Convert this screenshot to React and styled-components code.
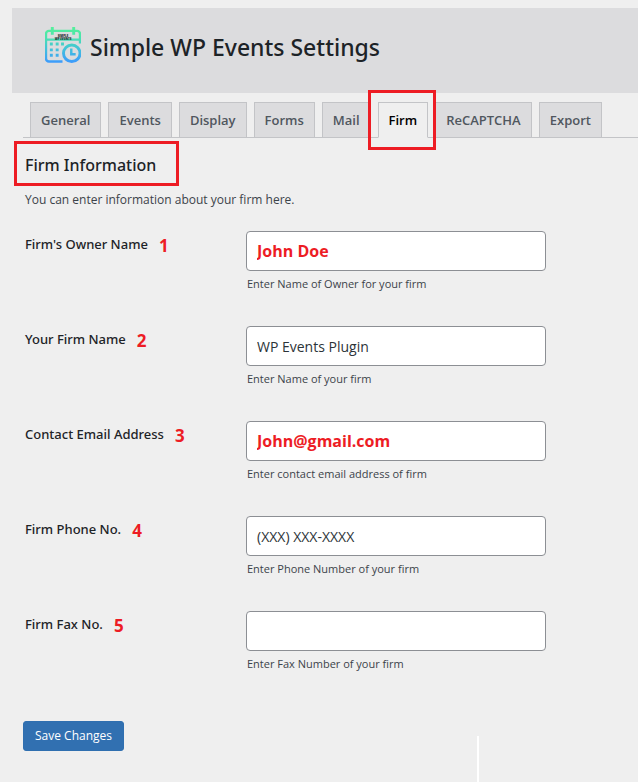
import React from "react";
import styled, { createGlobalStyle } from "styled-components";

const GlobalStyle = createGlobalStyle`
  *, *::before, *::after { box-sizing: border-box; }
  body {
    margin: 0;
    background: #efefef;
    color: #3c434a;
    font-family: "Open Sans", "Noto Sans", sans-serif;
    font-size: 13px;
    line-height: 20px;
  }
`;

const RED = "#ed1c24";

const Page = styled.div`
  display: flex;
  flex-direction: column;
  min-height: 100vh;
  padding: 8px 0 0 12px;
`;

const Header = styled.header`
  display: flex;
  align-items: center;
  gap: 9px;
  height: 85px;
  padding: 0 33px 11px;
  background: #dcdcde;
`;

const Title = styled.h1`
  margin: 0;
  padding-top: 3px;
  color: #1d2327;
  font-family: "Noto Sans", "Open Sans", sans-serif;
  font-size: 23px;
  font-weight: 500;
  line-height: 32px;
  white-space: nowrap;
`;

const Tabs = styled.nav`
  display: flex;
  gap: 7px;
  margin: 9px 0 0 11px;
  padding: 0 7px;
  border-bottom: 1px solid #c3c4c7;
`;

const Tab = styled.a`
  position: relative;
  height: 36px;
  margin-bottom: -1px;
  padding: 7px 10px;
  border: 1px solid #c3c4c7;
  border-bottom-color: ${(p) => (p.$active ? "#efefef" : "#c3c4c7")};
  background: ${(p) => (p.$active ? "#efefef" : "#dcdcde")};
  color: ${(p) => (p.$active ? "#000" : "#50575e")};
  font-weight: 600;
  line-height: 20px;
  text-decoration: none;
  white-space: nowrap;
  z-index: ${(p) => (p.$active ? 1 : 0)};
`;

const TabHighlight = styled.span`
  position: absolute;
  inset: -13px -9px -13px -11px;
  border: 3px solid ${RED};
  pointer-events: none;
`;

const Form = styled.form`
  display: flex;
  flex: 1;
  flex-direction: column;
  padding-left: 11px;
`;

const Heading = styled.h2`
  align-self: flex-start;
  width: 165px;
  margin: 3px 0 0 -9px;
  padding: 10px 8px 6px;
  border: 3px solid ${RED};
  color: #1d2327;
  font-family: "Noto Sans", "Open Sans", sans-serif;
  font-size: 16px;
  font-weight: 500;
  line-height: 23px;
  white-space: nowrap;
`;

const Intro = styled.p`
  margin: 4px 0 21px 2px;
  font-size: 12px;
`;

const Row = styled.div`
  display: grid;
  grid-template-columns: 221px minmax(0, 300px);
  height: 95px;
  padding-left: 2px;
`;

const LabelCell = styled.div`
  display: flex;
  align-items: flex-start;
  gap: 11px;
  padding-top: 3px;
`;

const Label = styled.label`
  color: #1d2327;
  font-family: "Noto Sans", "Open Sans", sans-serif;
  font-weight: 500;
`;

const StepNumber = styled.span`
  color: ${RED};
  font-size: 17px;
  font-weight: 700;
  line-height: 24px;
`;

const TextInput = styled.input`
  display: block;
  width: 100%;
  height: 40px;
  padding: 0 10px;
  border: 1px solid #8c8f94;
  border-radius: 4px;
  background: #fff;
  color: ${(p) => (p.$marked ? RED : "#2c3338")};
  font-family: inherit;
  font-size: ${(p) => (p.$marked ? "16px" : "14px")};
  font-weight: ${(p) => (p.$marked ? 700 : 400)};
`;

const Description = styled.p`
  margin: 4px 0 0 1px;
  font-size: 11px;
  line-height: 18px;
`;

const Footer = styled.footer`
  display: flex;
  flex: 1;
  align-items: flex-start;
  justify-content: space-between;
  padding: 15px 159px 0 0;
`;

const SaveButton = styled.button`
  height: 30px;
  padding: 0 11px;
  border: 1px solid #2f6fb0;
  border-radius: 3px;
  background: #3170b1;
  color: #fff;
  font-family: inherit;
  font-size: 12px;
  line-height: 28px;
`;

const Divider = styled.div`
  align-self: stretch;
  width: 2px;
  margin-top: 15px;
  background: #fff;
`;

const tabs = ["General", "Events", "Display", "Forms", "Mail", "Firm", "ReCAPTCHA", "Export"];

const fields = [
  { id: "owner", label: "Firm's Owner Name", value: "John Doe", marked: true, hint: "Enter Name of Owner for your firm" },
  { id: "firm", label: "Your Firm Name", value: "WP Events Plugin", hint: "Enter Name of your firm" },
  { id: "email", type: "email", label: "Contact Email Address", value: "John@gmail.com", marked: true, hint: "Enter contact email address of firm" },
  { id: "phone", type: "tel", label: "Firm Phone No.", value: "(XXX) XXX-XXXX", hint: "Enter Phone Number of your firm" },
  { id: "fax", type: "tel", label: "Firm Fax No.", value: "", hint: "Enter Fax Number of your firm" },
];

function CalendarLogo() {
  return (
    <svg width="36" height="36" viewBox="1 1 37 37" fill="none" aria-hidden="true">
      <defs>
        <linearGradient id="logo" x1="0" y1="1" x2="0" y2="37" gradientUnits="userSpaceOnUse">
          <stop offset="0" stopColor="#55f09a" />
          <stop offset="0.3" stopColor="#4be3ae" />
          <stop offset="0.65" stopColor="#42bfdd" />
          <stop offset="1" stopColor="#3d9cfb" />
        </linearGradient>
      </defs>
      <g stroke="url(#logo)">
        <path
          strokeWidth="2.5"
          d="M19 36.500H5a3 3 0 0 1-3-3V8a3 3 0 0 1 3-3h29a3 3 0 0 1 3 3v10M2 14h35"
        />
        <path strokeWidth="3" d="M8.500 1l.001 8M30.500 1l.001 8" />
        <circle cx="28.5" cy="28" r="8.5" strokeWidth="3" />
        <path strokeWidth="2.5" d="M28 23v6h4.500" />
      </g>
      <g fill="url(#logo)">
        <path d="M6 17h3v3H6zM12 17h3v3h-3zM17.500 17h3v3h-3zM6 23h3v3H6zM12 23h3v3h-3zM6 28.500h3v3H6zM12 28.500h3v3h-3z" />
      </g>
      <g fill="#1d2d2d" fontFamily="Open Sans, sans-serif" fontWeight="800" textAnchor="middle">
        <text x="19.5" y="11" fontSize="3">SIMPLE</text>
        <text x="19.5" y="14.5" fontSize="3">WP EVENTS</text>
      </g>
    </svg>
  );
}

function Field({ field, number }) {
  return (
    <Row>
      <LabelCell>
        <Label htmlFor={field.id}>{field.label}</Label>
        <StepNumber>{number}</StepNumber>
      </LabelCell>
      <div>
        <TextInput
          id={field.id}
          type={field.type || "text"}
          defaultValue={field.value}
          $marked={field.marked}
          aria-describedby={`${field.id}-hint`}
        />
        <Description id={`${field.id}-hint`}>{field.hint}</Description>
      </div>
    </Row>
  );
}

export default function App() {
  return (
    <>
      <GlobalStyle />
      <Page>
        <Header>
          <CalendarLogo />
          <Title>Simple WP Events Settings</Title>
        </Header>
        <Tabs>
          {tabs.map((tab) => (
            <Tab key={tab} href={`#${tab.toLowerCase()}`} $active={tab === "Firm"}>
              {tab}
              {tab === "Firm" && <TabHighlight />}
            </Tab>
          ))}
        </Tabs>
        <Form onSubmit={(e) => e.preventDefault()}>
          <Heading>Firm Information</Heading>
          <Intro>You can enter information about your firm here.</Intro>
          {fields.map((field, i) => (
            <Field key={field.id} field={field} number={i + 1} />
          ))}
          <Footer>
            <SaveButton type="submit">Save Changes</SaveButton>
            <Divider />
          </Footer>
        </Form>
      </Page>
    </>
  );
}
